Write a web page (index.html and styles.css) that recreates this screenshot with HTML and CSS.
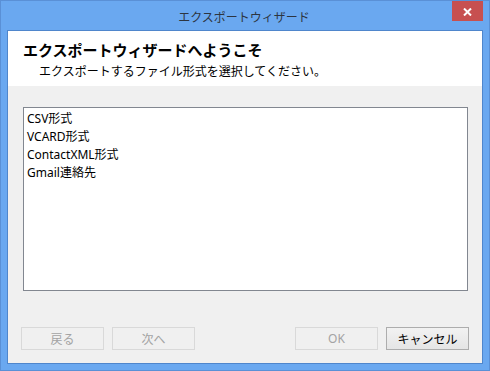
FILE: index.html
```html
<!DOCTYPE html>
<html lang="ja">
<head>
<meta charset="utf-8">
<title>エクスポートウィザード</title>
<link rel="stylesheet" href="styles.css">
</head>
<body>
<div class="window">
  <div class="titlebar">
    <span class="spacer"></span>
    <span class="title">エクスポートウィザード</span>
    <span class="close-wrap">
      <span class="close">
        <svg width="9" height="8" viewBox="0 0 9 8"><path d="M1 0.5 L8 7.5 M8 0.5 L1 7.5" stroke="#fff" stroke-width="2" fill="none"/></svg>
      </span>
    </span>
  </div>
  <div class="client">
    <div class="header">
      <div class="heading">エクスポートウィザードへようこそ</div>
      <div class="subtitle">エクスポートするファイル形式を選択してください。</div>
    </div>
    <div class="body">
      <ul class="listbox">
        <li>CSV形式</li>
        <li>VCARD形式</li>
        <li>ContactXML形式</li>
        <li>Gmail連絡先</li>
      </ul>
      <div class="buttons">
        <div class="group">
          <button class="btn" disabled>戻る</button>
          <button class="btn" disabled>次へ</button>
        </div>
        <div class="group">
          <button class="btn" disabled>OK</button>
          <button class="btn primary">キャンセル</button>
        </div>
      </div>
    </div>
  </div>
</div>
</body>
</html>
```
FILE: styles.css
```css
* { box-sizing: border-box; }
html, body { margin: 0; padding: 0; }
body {
  width: 490px;
  height: 371px;
  font-family: "Noto Sans", "Noto Sans CJK JP", sans-serif;
  font-size: 12px;
  color: #000;
}
.window {
  width: 490px;
  height: 371px;
  background: #6aa8f0;
  border: 1px solid #5a90d6;
  display: flex;
  flex-direction: column;
  padding: 0 6px 6px 6px;
}
.titlebar {
  height: 29px;
  display: grid;
  grid-template-columns: 1fr auto 1fr;
  align-items: start;
}
.title {
  font-family: "Noto Sans CJK JP", sans-serif;
  font-size: 12px;
  line-height: 17px;
  padding-top: 7px;
  color: #2d3540;
  margin-left: -2px;
}
.close-wrap {
  display: flex;
  justify-content: flex-end;
}
.close {
  width: 31px;
  height: 20px;
  background: #c75050;
  display: flex;
  align-items: center;
  justify-content: center;
  padding-top: 1px;
}
.close svg { display: block; }
.client {
  flex: 1;
  border: 1px solid #4f86cc;
  display: flex;
  flex-direction: column;
  background: #f0f0f0;
}
.header {
  height: 55px;
  background: #fff;
  padding: 10px 0 0 15px;
  font-family: "Noto Sans CJK JP", sans-serif;
}
.heading {
  font-size: 15px;
  font-weight: bold;
  line-height: 18px;
}
.subtitle {
  font-size: 12px;
  line-height: 16px;
  margin-top: 4px;
  padding-left: 16px;
}
.body {
  flex: 1;
  display: flex;
  flex-direction: column;
  padding: 21px 13px 13px 13px;
}
.listbox {
  list-style: none;
  margin: 0 1px 0 2px;
  height: 184px;
  background: #fff;
  border: 1px solid #828790;
  padding: 2px 3px;
}
.listbox li {
  line-height: 18px;
  height: 18px;
}
.buttons {
  margin-top: auto;
  display: flex;
  justify-content: space-between;
}
.group {
  display: flex;
  gap: 8px;
}
.btn {
  width: 83px;
  height: 23px;
  font-family: "Noto Sans", "Noto Sans CJK JP", sans-serif;
  font-size: 12px;
  padding: 0;
  border: 1px solid #d9d9d9;
  background: #f0f0f0;
  color: #a3a3a3;
  border-radius: 0;
}
.btn.primary {
  border-color: #adadad;
  background: linear-gradient(#f2f2f2, #e5e5e5);
  color: #000;
}
```
